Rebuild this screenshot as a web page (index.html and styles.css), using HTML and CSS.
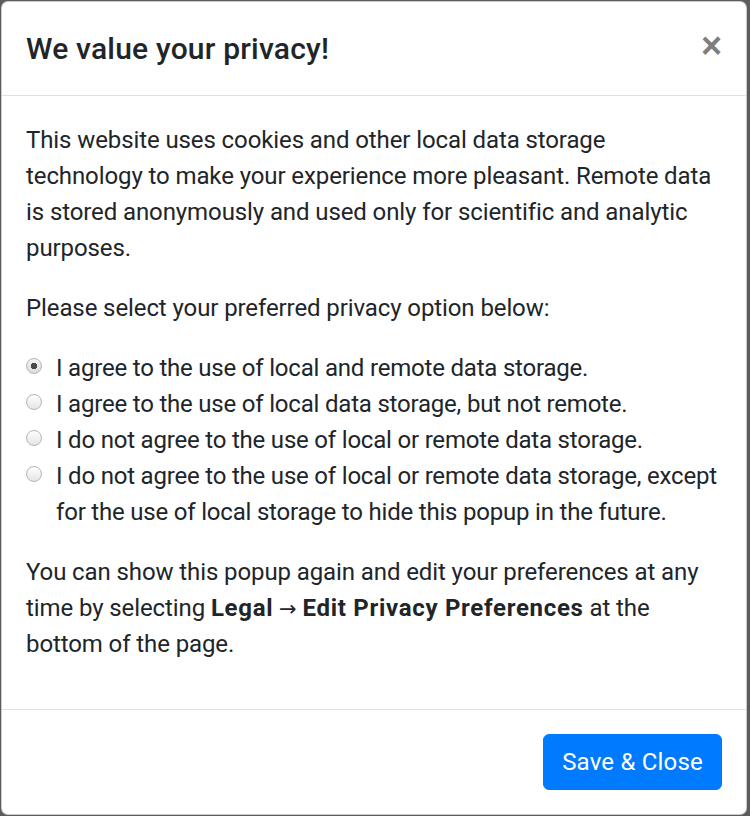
FILE: index.html
```html
<!DOCTYPE html>
<html lang="en">
<head>
<meta charset="utf-8">
<title>Privacy</title>
<link rel="stylesheet" href="styles.css">
</head>
<body>
<div class="modal">
  <div class="modal-header">
    <h5 class="modal-title">We value your privacy!</h5>
    <button class="close" type="button" aria-label="Close">×</button>
  </div>
  <div class="modal-body">
    <p>This website uses cookies and other local data storage technology to make your experience more pleasant. Remote data is stored anonymously and used only for scientific and analytic purposes.</p>
    <p>Please select your preferred privacy option below:</p>
    <div class="options">
      <label class="form-check"><input type="radio" name="p" checked><span>I agree to the use of local and remote data storage.</span></label>
      <label class="form-check"><input type="radio" name="p"><span>I agree to the use of local data storage, but not remote.</span></label>
      <label class="form-check"><input type="radio" name="p"><span>I do not agree to the use of local or remote data storage.</span></label>
      <label class="form-check"><input type="radio" name="p"><span>I do not agree to the use of local or remote data storage, except for the use of local storage to hide this popup in the future.</span></label>
    </div>
    <p>You can show this popup again and edit your preferences at any time by selecting <b>Legal</b> <span class="arrow">→</span> <b>Edit Privacy Preferences</b> at the bottom of the page.</p>
  </div>
  <div class="modal-footer">
    <button class="btn" type="button">Save &amp; Close</button>
  </div>
</div>
</body>
</html>
```
FILE: styles.css
```css
html, body {
  margin: 0;
  padding: 0;
}
body {
  background: #5c5c5c;
  font-family: Roboto, "Noto Sans", sans-serif;
  font-size: 24px;
  line-height: 36px;
  color: #212529;
  padding: 1px 3px 0 1px;
  height: 816px;
  box-sizing: border-box;
  overflow: hidden;
}
.modal {
  background: #fff;
  border: 1px solid rgba(0,0,0,.2);
  border-radius: 7px;
  box-sizing: border-box;
  display: flex;
  flex-direction: column;
}
.modal-header {
  display: flex;
  align-items: flex-start;
  justify-content: space-between;
  padding: 24px;
  border-bottom: 1px solid #dee2e6;
}
.modal-title {
  margin: 0;
  font-size: 30px;
  line-height: 45px;
  font-weight: 500;
  letter-spacing: 0.2px;
}
.close {
  background: none;
  border: 0;
  padding: 24px;
  margin: -22px -24px -26px auto;
  font-family: "Liberation Sans", sans-serif;
  font-size: 36px;
  font-weight: 700;
  line-height: 1;
  color: #000;
  opacity: .5;
}
.modal-body {
  padding: 26px 24px 23px;
  letter-spacing: -0.1px;
}
.modal-body p {
  margin: 0 0 24px;
}
.modal-body b {
  font-weight: 700;
  letter-spacing: 0.7px;
}
.arrow {
  font-family: "DejaVu Sans", sans-serif;
  font-size: 21px;
  line-height: 1;
  letter-spacing: 0;
}
.options {
  margin-bottom: 24px;
}
.form-check {
  display: flex;
  align-items: flex-start;
  letter-spacing: -0.2px;
}
.form-check input {
  appearance: none;
  -webkit-appearance: none;
  width: 16px;
  height: 16px;
  margin: 8px 14px 0 0;
  flex: none;
  border-radius: 50%;
  border: 1px solid #b5b5b5;
  background: linear-gradient(#ffffff, #e4e4e4);
  box-sizing: border-box;
}
.form-check input:checked {
  background: radial-gradient(circle, #4a4a4a 0 3px, transparent 3.5px), linear-gradient(#f4f4f4, #dcdcdc);
}
.modal-footer {
  display: flex;
  justify-content: flex-end;
  padding: 18px;
  border-top: 1px solid #dee2e6;
}
.btn {
  margin: 6px;
  font-family: inherit;
  font-size: 24px;
  line-height: 36px;
  padding: 9px 18px;
  color: #fff;
  background: #007bff;
  border: 1px solid #007bff;
  border-radius: 6px;
  letter-spacing: 0.2px;
}
```
